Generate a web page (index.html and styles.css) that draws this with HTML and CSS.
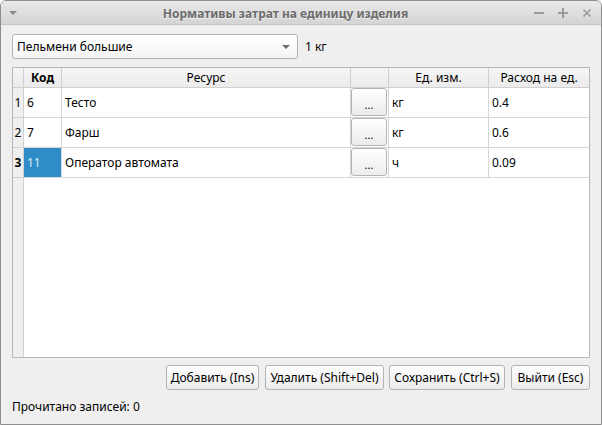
FILE: index.html
```html
<!DOCTYPE html>
<html lang="ru">
<head>
<meta charset="utf-8">
<link rel="stylesheet" href="styles.css">
</head>
<body>
<div class="window">
  <div class="titlebar">
    <span class="menu-arrow"></span>
    <span class="title">Нормативы затрат на единицу изделия</span>
    <span class="controls">
      <svg width="10" height="10" viewBox="0 0 10 10"><rect x="0" y="4" width="10" height="2" fill="#9a9a9a"/></svg>
      <svg width="10" height="10" viewBox="0 0 10 10"><rect x="0" y="4" width="10" height="2" fill="#9a9a9a"/><rect x="4" y="0" width="2" height="10" fill="#9a9a9a"/></svg>
      <svg width="10" height="10" viewBox="0 0 10 10"><path d="M1.5 1.5 L8.5 8.5 M8.5 1.5 L1.5 8.5" stroke="#9a9a9a" stroke-width="1.6"/></svg>
    </span>
  </div>
  <div class="content">
    <div class="toprow">
      <div class="combo">
        <span>Пельмени большие</span>
        <span class="combo-arrow"></span>
      </div>
      <span class="unit">1 кг</span>
    </div>
    <div class="table">
      <div class="grid">
        <div class="h corner"></div>
        <div class="h bold">Код</div>
        <div class="h">Ресурс</div>
        <div class="h"></div>
        <div class="h">Ед. изм.</div>
        <div class="h last">Расход на ед.</div>

        <div class="rh">1</div>
        <div class="c">6</div>
        <div class="c">Тесто</div>
        <div class="c btncell"><span class="dots">...</span></div>
        <div class="c">кг</div>
        <div class="c last">0.4</div>

        <div class="rh">2</div>
        <div class="c">7</div>
        <div class="c">Фарш</div>
        <div class="c btncell"><span class="dots">...</span></div>
        <div class="c">кг</div>
        <div class="c last">0.6</div>

        <div class="rh bold">3</div>
        <div class="c sel">11</div>
        <div class="c">Оператор автомата</div>
        <div class="c btncell"><span class="dots">...</span></div>
        <div class="c">ч</div>
        <div class="c last">0.09</div>
      </div>
      <div class="filler">
        <div class="rhfill"></div>
      </div>
    </div>
    <div class="buttons">
      <button class="btn w-add">Добавить (Ins)</button>
      <button class="btn w-del">Удалить (Shift+Del)</button>
      <button class="btn w-save">Сохранить (Ctrl+S)</button>
      <button class="btn w-exit">Выйти (Esc)</button>
    </div>
    <div class="status">Прочитано записей: 0</div>
  </div>
</div>
</body>
</html>
```
FILE: styles.css
```css
* { box-sizing: border-box; }
html, body {
  margin: 0;
  padding: 0;
  width: 602px;
  height: 425px;
  overflow: hidden;
  background: #ffffff;
  font-family: "Noto Sans", "Open Sans", sans-serif;
  font-size: 12px;
  color: #000;
}
.window {
  width: 602px;
  height: 425px;
  border: 1px solid #8e8e8e;
  border-radius: 6px 6px 0 0;
  overflow: hidden;
  background: #efefef;
  display: flex;
  flex-direction: column;
}
.titlebar {
  height: 24px;
  flex: none;
  background: linear-gradient(#e9e9e9, #d4d4d4);
  border-bottom: 1px solid #c4c4c4;
  display: flex;
  align-items: center;
  position: relative;
}
.menu-arrow {
  width: 0;
  height: 0;
  margin-left: 8px;
  border-left: 4px solid transparent;
  border-right: 4px solid transparent;
  border-top: 4px solid #8a8a8a;
}
.title {
  flex: 1;
  text-align: center;
  font-weight: bold;
  color: #6c6c6c;
  text-shadow: 0 1px 0 #f2f2f2;
  margin-left: 20px;
  padding-top: 2px;
}
.controls {
  display: flex;
  gap: 14px;
  margin-right: 9px;
  align-items: center;
}
.controls svg { display: block; }
.content {
  flex: 1;
  padding: 9px 11px 0 11px;
  display: flex;
  flex-direction: column;
}
.toprow {
  display: flex;
  align-items: center;
  height: 25px;
  gap: 7px;
}
.combo {
  width: 286px;
  height: 25px;
  border: 1px solid #b4b4b4;
  border-radius: 3px;
  background: linear-gradient(#ffffff, #f4f4f4);
  display: flex;
  align-items: center;
  justify-content: space-between;
  padding: 0 7px 0 4px;
}
.combo-arrow {
  width: 0;
  height: 0;
  border-left: 4px solid transparent;
  border-right: 4px solid transparent;
  border-top: 4px solid #6e6e6e;
}
.table {
  margin-top: 8px;
  height: 291px;
  border: 1px solid #b8b8b8;
  background: #fff;
  display: flex;
  flex-direction: column;
}
.grid {
  display: grid;
  grid-template-columns: 11px 38px 289px 38px 100px 100px;
  grid-template-rows: 20px 30px 30px 30px;
}
.h {
  background: linear-gradient(#f6f6f6, #ebebeb);
  border-right: 1px solid #cfcfcf;
  border-bottom: 1px solid #cfcfcf;
  display: flex;
  align-items: center;
  justify-content: center;
  white-space: nowrap;
}
.h.last, .c.last { border-right: none; }
.bold { font-weight: bold; }
.rh {
  background: #efefef;
  border-right: 1px solid #cfcfcf;
  border-bottom: 1px solid #cfcfcf;
  display: flex;
  align-items: center;
  justify-content: center;
}
.c {
  border-right: 1px solid #d6d6d6;
  border-bottom: 1px solid #d6d6d6;
  display: flex;
  align-items: center;
  padding-left: 3px;
  white-space: nowrap;
}
.c.sel {
  background: #308cc6;
  color: #d6ecfa;
}
.btncell {
  padding: 0;
  position: relative;
}
.dots {
  position: absolute;
  left: 0; top: 0; right: 1px; bottom: 1px;
  border: 1px solid #b4b4b4;
  border-radius: 3px;
  background: linear-gradient(#ffffff, #ececec);
  display: flex;
  align-items: center;
  justify-content: center;
  padding-top: 4px;
  font-size: 11px;
}
.filler {
  flex: 1;
  display: flex;
}
.rhfill {
  width: 11px;
  background: #efefef;
  border-right: 1px solid #cfcfcf;
}
.buttons {
  display: flex;
  justify-content: flex-end;
  gap: 6px;
  margin-top: 7px;
}
.btn {
  font-family: inherit;
  font-size: 12px;
  height: 25px;
  padding: 0;
  border: 1px solid #b4b4b4;
  border-radius: 3px;
  background: linear-gradient(#fdfdfd, #ececec);
  color: #000;
  white-space: nowrap;
}
.w-add { width: 93px; }
.w-del { width: 119px; margin-right: -1px; }
.w-save { width: 116px; }
.w-exit { width: 79px; }
.status {
  margin-top: 8px;
}
```
